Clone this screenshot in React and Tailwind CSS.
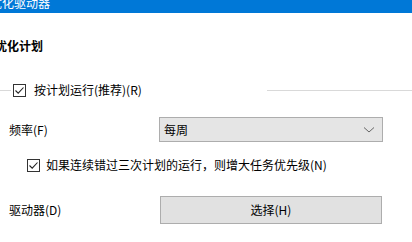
import React from "react"

function CheckBox() {
  return (
    <div className="w-[13px] h-[13px] border border-[#333] bg-white flex items-center justify-center shrink-0">
      <svg width="11" height="11" viewBox="0 0 11 11">
        <polyline points="1.5,5.5 4.2,8.2 9.5,2.5" fill="none" stroke="#222" strokeWidth="1.1" />
      </svg>
    </div>
  )
}

export default function App() {
  return (
    <div
      className="w-[412px] h-[242px] overflow-hidden bg-white text-[12px] text-black"
      style={{ fontFamily: '"Noto Sans CJK SC", "Noto Sans", sans-serif' }}
    >
      {/* title bar, cut off at top */}
      <div className="h-[13px] bg-[#0078d7] overflow-hidden">
        <div className="text-white leading-[12px] -mt-[3px] -ml-[10px]">优化驱动器</div>
      </div>

      {/* section heading */}
      <div className="mt-[25px] -ml-[5px] font-bold leading-[16px]">优化计划</div>

      {/* schedule checkbox with group line */}
      <div className="mt-[29px] flex items-center h-[14px]">
        <div className="w-[11px] h-px bg-[#d9d9d9]" />
        <div className="ml-[2px]">
          <CheckBox />
        </div>
        <span className="ml-[8px] leading-[14px]">按计划运行(推荐)(R)</span>
        <div className="ml-auto w-[145px] h-px bg-[#d9d9d9]" />
      </div>

      {/* frequency */}
      <div className="mt-[20px] flex items-center">
        <span className="ml-[9px] w-[150px]">频率(F)</span>
        <div className="w-[224px] h-[25px] bg-[#e5e5e5] border border-[#adadad] flex items-center justify-between pl-[4px] pr-[7px]">
          <span>每周</span>
          <svg width="12" height="8" viewBox="0 0 12 8">
            <polyline points="1,1.5 6,6 11,1.5" fill="none" stroke="#666" strokeWidth="1" />
          </svg>
        </div>
      </div>

      {/* missed runs checkbox */}
      <div className="mt-[16px] flex items-center h-[14px]">
        <div className="ml-[27px]">
          <CheckBox />
        </div>
        <span className="ml-[6px] leading-[14px]">如果连续错过三次计划的运行，则增大任务优先级(N)</span>
      </div>

      {/* drives */}
      <div className="mt-[24px] flex items-center">
        <span className="ml-[9px] w-[151px]">驱动器(D)</span>
        <button className="w-[222px] h-[28px] bg-[#e1e1e1] border border-[#adadad] flex items-center justify-center">
          选择(H)
        </button>
      </div>
    </div>
  )
}
